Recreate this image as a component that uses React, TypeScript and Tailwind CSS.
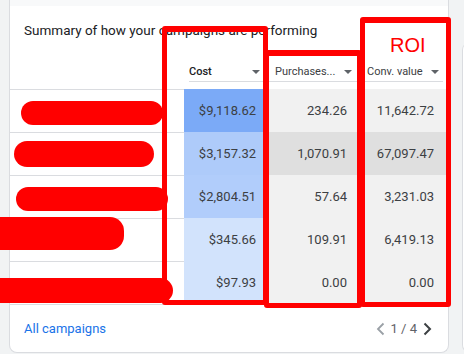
import React from "react";

const rows = [
  { cost: "$9,118.62", costBg: "bg-[#7baaf7]", p: "234.26", c: "11,642.72", dark: false },
  { cost: "$3,157.32", costBg: "bg-[#aecbfa]", p: "1,070.91", c: "67,097.47", dark: true },
  { cost: "$2,804.51", costBg: "bg-[#b1cdfb]", p: "57.64", c: "3,231.03", dark: false },
  { cost: "$345.66", costBg: "bg-[#d2e3fc]", p: "109.91", c: "6,419.13", dark: false },
  { cost: "$97.93", costBg: "bg-[#d2e3fc]", p: "0.00", c: "0.00", dark: false },
];

function Arrow() {
  return (
    <svg width="8" height="4" viewBox="0 0 8 4" className="shrink-0">
      <path d="M0 0 L8 0 L4 4 Z" fill="#5f6368" />
    </svg>
  );
}

export default function App() {
  return (
    <div
      className="relative w-[464px] h-[354px] overflow-hidden bg-[#f1f3f4] flex items-start"
      style={{ fontFamily: "Roboto, 'Liberation Sans', sans-serif" }}
    >
      {/* main card */}
      <div className="ml-[9px] w-[440px] bg-white border-l border-r border-b border-[#dadce0] rounded-b-lg flex flex-col">
        <div className="h-[6px] bg-[#f8f9fa]" />
        <div className="h-[48px] flex items-center pl-[14px] text-[13.5px] text-[#202124]">
          Summary of how your campaigns are performing
        </div>
        {/* header */}
        <div className="h-[28px] flex">
          <div className="w-[179px]" />
          <div className="w-[254px] border-b border-[#dadce0] flex items-end pb-[1px] text-[11px] leading-[16px]">
            <div className="w-[75px] flex items-center justify-between pr-[4px] font-medium text-[#202124]">
              <span>Cost</span>
              <Arrow />
            </div>
            <div className="w-[96px] flex items-center justify-between pl-[11px] pr-[8px] text-[#3c4043]">
              <span>Purchases...</span>
              <Arrow />
            </div>
            <div className="w-[83px] flex items-center justify-between pl-[7px] pr-[4px] text-[#3c4043]">
              <span>Conv. value</span>
              <Arrow />
            </div>
          </div>
        </div>
        <div className="h-[7px]" />
        {/* rows */}
        <div className="flex flex-col text-[13px] text-[#3c4043]">
          {rows.map((r, i) => (
            <div key={i} className="flex h-[43px]">
              <div className="w-[174px] border-t border-[#dadce0]" />
              <div className={`w-[80px] ${r.costBg} flex items-center justify-end pr-[8px]`}>{r.cost}</div>
              <div className={`w-[96px] ${r.dark ? "bg-[#dfdfdf]" : "bg-[#f1f1f1]"} flex items-center justify-end pr-[13px]`}>{r.p}</div>
              <div className={`w-[88px] ${r.dark ? "bg-[#dfdfdf]" : "bg-[#f1f1f1]"} flex items-center justify-end pr-[14px]`}>{r.c}</div>
            </div>
          ))}
          <div className="w-[174px] border-t border-[#dadce0]" />
        </div>
        {/* footer */}
        <div className="h-[47px] flex items-center justify-between pl-[14px] pr-[16px]">
          <span className="text-[13px] text-[#1a73e8]">All campaigns</span>
          <div className="flex items-center gap-[6px] text-[13px] text-[#5f6368]">
            <svg width="9" height="14" viewBox="0 0 9 14">
              <path d="M7.5 1.5 L2 7 L7.5 12.5" fill="none" stroke="#9aa0a6" strokeWidth="1.8" />
            </svg>
            <span>1 / 4</span>
            <svg width="9" height="14" viewBox="0 0 9 14">
              <path d="M1.5 1.5 L7 7 L1.5 12.5" fill="none" stroke="#3c4043" strokeWidth="2" />
            </svg>
          </div>
        </div>
      </div>
      {/* neighbouring card */}
      <div className="ml-[13px] mt-[42px] w-[40px] h-[311px] shrink-0 bg-white border-l border-b border-[#dadce0] rounded-tl-lg rounded-bl-lg" />

      {/* red annotations */}
      <div className="absolute left-[162px] top-[26px] w-[106px] h-[279px] border-[5px] border-t-[6px] border-[#ff0000] rounded-[3px]" />
      <div className="absolute left-[264px] top-[50px] w-[98px] h-[258px] border-[5px] border-t-[6px] border-[#ff0000] rounded-[3px]" />
      <div className="absolute left-[360px] top-[17px] w-[91px] h-[290px] border-[5px] border-t-[6px] border-[#ff0000] rounded-[3px]" />
      <div
        className="absolute left-[390px] top-[33px] text-[20px] leading-[24px] text-[#ff0000]"
        style={{ fontFamily: "'Liberation Sans', Arial, sans-serif" }}
      >
        ROI
      </div>
      <div className="absolute left-[21px] top-[101px] w-[142px] h-[24px] rounded-full bg-[#ff0000]" />
      <div className="absolute left-[14px] top-[141px] w-[140px] h-[26px] rounded-full bg-[#ff0000]" />
      <div className="absolute left-[16px] top-[187px] w-[152px] h-[24px] rounded-full bg-[#ff0000]" />
      <div className="absolute left-[-20px] top-[217px] w-[144px] h-[33px] rounded-[14px] bg-[#ff0000]" />
      <div className="absolute left-[-20px] top-[278px] w-[193px] h-[25px] rounded-full bg-[#ff0000]" />
    </div>
  );
}
